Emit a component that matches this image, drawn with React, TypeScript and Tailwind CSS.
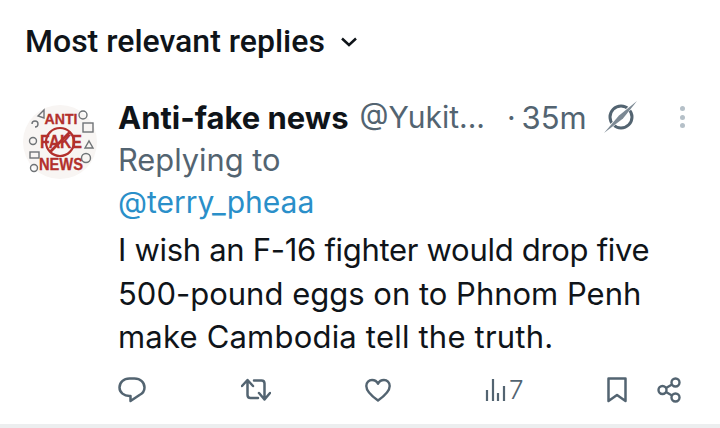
function Avatar() {
  return (
    <svg width="74" height="74" viewBox="0 0 74 74" className="shrink-0">
      <circle cx="37" cy="37" r="37" fill="#f8f5f3" />
      <g fontFamily="'Liberation Sans', sans-serif" fontWeight="700" fill="#b3302c" stroke="#b3302c" strokeWidth="0.300" textAnchor="middle">
        <text x="38" y="19" fontSize="14" textLength="33" lengthAdjust="spacingAndGlyphs">ANTI</text>
        <text x="38" y="43" fontSize="18" textLength="42" lengthAdjust="spacingAndGlyphs">FAKE</text>
        <text x="38" y="65" fontSize="16" textLength="44" lengthAdjust="spacingAndGlyphs">NEWS</text>
      </g>
      <circle cx="37" cy="37" r="14" fill="none" stroke="#b3302c" strokeWidth="2.200" />
      <path d="M27 47L47 27" stroke="#b3302c" strokeWidth="2.800" />
      <g fill="none" stroke="#6f7376" strokeWidth="1.400">
        <circle cx="60" cy="10" r="4" />
        <rect x="60" y="18" width="10" height="9" />
        <path d="M62 43l4-7 4 7z" />
        <circle cx="63" cy="53" r="4.500" />
        <path d="M15 11l6-6v8z" />
        <path d="M9 19a3 3 0 1 1 3 3" />
        <circle cx="10" cy="36" r="3.500" />
        <rect x="7" y="47" width="9" height="6" />
        <circle cx="11" cy="63" r="3.500" />
      </g>
    </svg>
  );
}

function Comment() {
  return (
    <svg width="28" height="26" viewBox="0 0 28 26" fill="none" stroke="#536471" strokeWidth="2.500" strokeLinejoin="round">
      <path d="M11.500 1.500h5C22.500 1.500 26.500 5.500 26.500 10.500c0 3.500-2 6-5 7.500l-9 6V19h-1C6 19 1.500 15.500 1.500 10.500 1.500 5.500 5.500 1.500 11.500 1.500z" />
    </svg>
  );
}

function Repost() {
  return (
    <svg width="30" height="24" viewBox="0 0 30 24" fill="none" stroke="#536471" strokeWidth="2.500" strokeLinecap="round" strokeLinejoin="round">
      <path d="M1 8l5.500-6L12 8M6.500 3v14c0 2 1 3 3 3H17" />
      <path d="M13 2.500h7.500c2 0 3 1 3 3V20M18 15l5.500 6.500L29 15" />
    </svg>
  );
}

function Heart() {
  return (
    <svg width="26" height="24" viewBox="0 0 26 24" fill="none" stroke="#536471" strokeWidth="2.400" strokeLinejoin="round">
      <path d="M13 22.500C8 19 1.300 14 1.300 8 1.300 4.500 4 2 7 2c2.500 0 4.800 1.300 6 3.800C14.200 3.300 16.500 2 19 2c3 0 5.700 2.500 5.700 6 0 6-6.700 11-11.700 14.500z" />
    </svg>
  );
}

function Views() {
  return (
    <svg width="21" height="24" viewBox="0 0 21 24" fill="none" stroke="#536471" strokeWidth="2.200">
      <path d="M2 12v11M8 1v22M13 15v8M19 8v15" />
    </svg>
  );
}

function Bookmark() {
  return (
    <svg width="20" height="26" viewBox="0 0 20 26" fill="none" stroke="#536471" strokeWidth="2.500" strokeLinejoin="round">
      <path d="M1.500 1.500h17v22.500L10 18l-8.500 6z" />
    </svg>
  );
}

function Share() {
  return (
    <svg width="26" height="26" viewBox="0 0 26 26" fill="none" stroke="#536471" strokeWidth="2.400">
      <circle cx="18.500" cy="5.500" r="4" />
      <circle cx="5.500" cy="13" r="4" />
      <circle cx="18.500" cy="20.500" r="4" />
      <path d="M9 11l6-3.500M9 15l6 3.500" />
    </svg>
  );
}

function Slash() {
  return (
    <svg width="34" height="34" viewBox="0 0 34 34" fill="none" className="ml-[17px]">
      <circle cx="17" cy="17" r="11" stroke="#536471" strokeWidth="3" />
      <path d="M1 32L33 1" stroke="#ffffff" strokeWidth="4" />
      <path d="M0 33L15 15.500 33 1 19 18.500z" fill="#7c8994" />
    </svg>
  );
}

export default function App() {
  return (
    <div className="w-[720px] h-[428px] bg-white flex flex-col overflow-hidden font-['Roboto',sans-serif]">
      <div className="h-[84px] pl-[25px] flex items-center gap-[15px] pb-[2px]">
        <span className="text-[32px] font-medium text-[#0f1419] leading-none">Most relevant replies</span>
        <svg width="18" height="12" viewBox="0 0 18 12" fill="none" stroke="#0f1419" strokeWidth="2.500" className="mt-[1px]">
          <path d="M2 2.500l7 6.500 7-6.500" />
        </svg>
      </div>
      <div className="flex pl-[23px] flex-1 min-h-0">
        <div className="w-[95px] pt-[21px]">
          <Avatar />
        </div>
        <div className="flex-1 flex flex-col font-['Inter',sans-serif]">
          <div className="flex items-center h-[36px] text-[30px] leading-none whitespace-nowrap mt-[15px]">
            <span className="font-bold text-[#0f1419] text-[31px]">Anti-fake news</span>
            <span className="text-[#536471] ml-[11px]">@Yukit...</span>
            <span className="text-[#536471] ml-[22px]">·</span>
            <span className="text-[#536471] ml-[6px] text-[31px]">35m</span>
            <Slash />
            <div className="ml-[42px] flex flex-col gap-[3.500px]">
              <span className="w-[5px] h-[5px] rounded-full bg-[#b5c0c8]" />
              <span className="w-[5px] h-[5px] rounded-full bg-[#b5c0c8]" />
              <span className="w-[5px] h-[5px] rounded-full bg-[#b5c0c8]" />
            </div>
          </div>
          <div className="text-[30.800px] leading-[43px] mt-[3px] text-[#536471]">Replying to</div>
          <div className="text-[30px] leading-[43px] text-[#2a8fc9]">@terry_pheaa</div>
          <div className="text-[31px] leading-[43.500px] text-[#0f1419] whitespace-nowrap mt-[4px]">
            <div className="tracking-[-0.300px]">I wish an F-16 fighter would drop five</div>
            <div>500-pound eggs on to Phnom Penh</div>
            <div className="tracking-[0.200px]">make Cambodia tell the truth.</div>
          </div>
          <div className="flex items-center h-[40px] mt-[11px] relative">
            <div className="w-[123px] flex"><Comment /></div>
            <div className="w-[124px] flex"><Repost /></div>
            <div className="w-[120px] flex"><Heart /></div>
            <div className="w-[122px] flex items-center gap-[3px] text-[#536471] text-[26px] font-light leading-none">
              <Views /><span>7</span>
            </div>
            <div className="w-[50px] flex"><Bookmark /></div>
            <Share />
          </div>
        </div>
      </div>
      <div className="h-[4px] bg-[#eceeef] shrink-0" />
    </div>
  );
}
